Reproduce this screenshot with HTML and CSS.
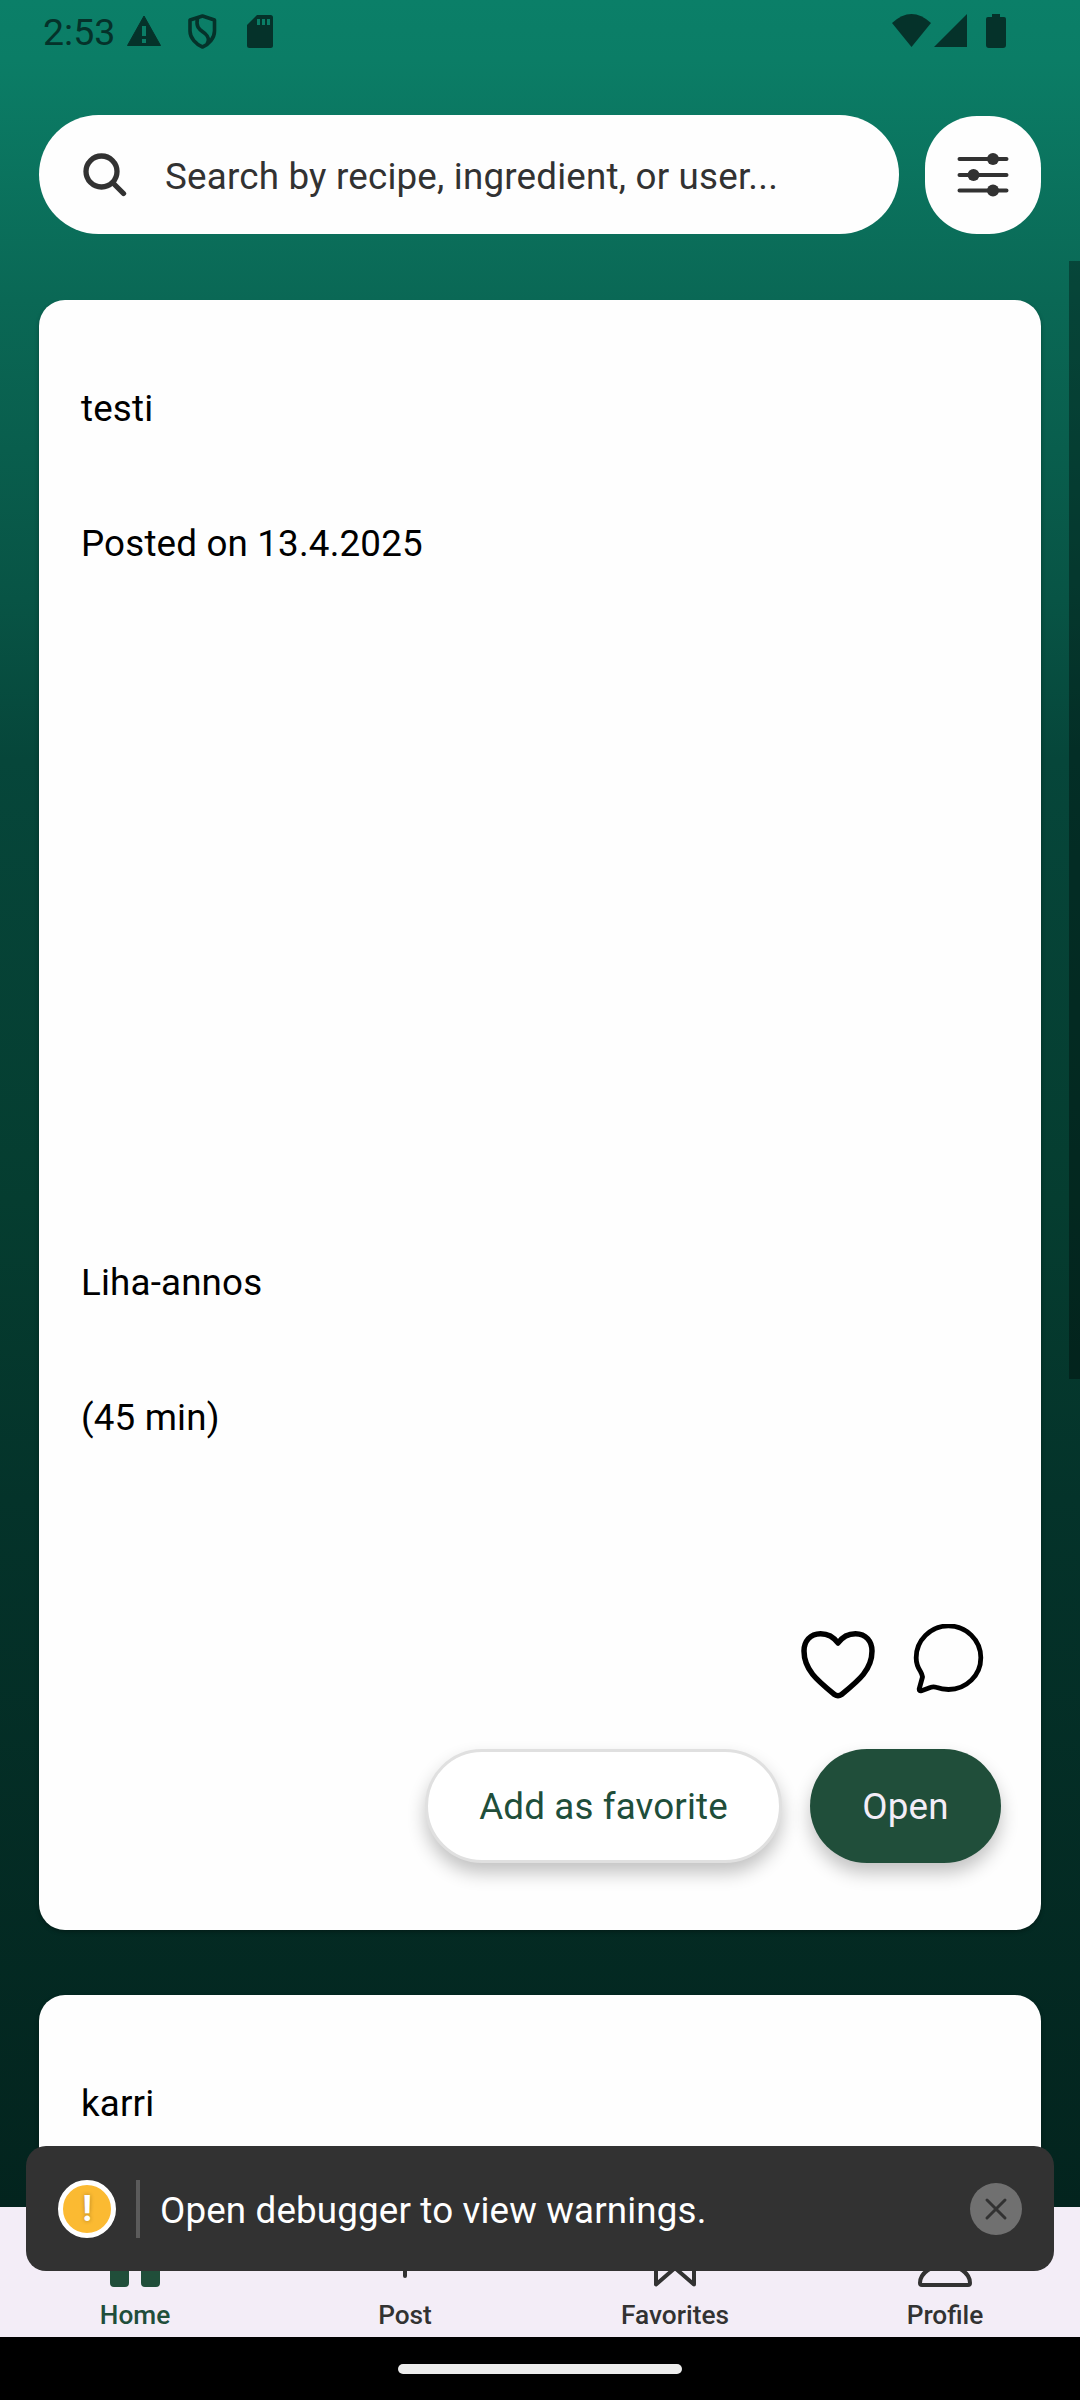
FILE: index.html
```html
<!DOCTYPE html>
<html lang="en">
<head>
<meta charset="utf-8">
<title>Recipes</title>
<link rel="stylesheet" href="styles.css">
</head>
<body>
<div class="screen">
  <header class="status">
    <span class="clock">2:53</span>
    <svg class="status-left" width="150" height="36" viewBox="0 0 150 36">
      <path d="M18 2 34.500 31.500H1.500Z" fill="currentColor" stroke="currentColor" stroke-linejoin="round"/>
      <path d="M16 12h4v10h-4zM16 25h4v4h-4z" fill="#0a7d66"/>
      <path d="M76.5 2 88.500 6V17C88.500 24 83 30.500 76.500 33 70 30.500 64 24 64 17V6Z" fill="none" stroke="currentColor" stroke-width="3.600" stroke-linejoin="round"/>
      <path d="M71.500 4C69.500 14 74 15.500 79 19.500 83 23 83 27 81 30" fill="none" stroke="currentColor" stroke-width="3.600"/>
      <path d="M131 1h13.500q2.500 0 2.500 2.500v28q0 2.500-2.500 2.500h-21q-2.500 0-2.500-2.500V11Z" fill="currentColor"/>
      <path d="M131 5h3v6h-3zM136 5h3v6h-3zM141 5h3v6h-3z" fill="#0a7d66"/>
    </svg>
    <svg class="status-right" width="116" height="36" viewBox="0 0 116 36">
      <path d="M0 9Q19.500-9 39 9L19.500 33Z" fill="currentColor"/>
      <path d="M42 33 75 0V33Z" fill="currentColor"/>
      <path d="M100 0h8v3h4q2 0 2 2v26q0 3-3 3H97q-3 0-3-3V5q0-2 2-2h4Z" fill="currentColor"/>
    </svg>
  </header>

  <div class="search-row">
    <div class="search">
      <svg width="44" height="44" viewBox="0 0 44 44"><circle cx="18.500" cy="18.500" r="15.500" fill="none" stroke="#323232" stroke-width="5.300"/><path d="M30 30 40.500 40.500" stroke="#323232" stroke-width="5.300" stroke-linecap="round"/></svg>
      <span class="placeholder">Search by recipe, ingredient, or user...</span>
    </div>
    <div class="filter">
      <svg width="52" height="44" viewBox="0 0 52 44" stroke="#323232" stroke-width="4" stroke-linecap="round"><path d="M2.500 6H49.500M2.500 22H49.500M2.500 37.500H49.500"/><g fill="#323232" stroke="none"><circle cx="36" cy="6" r="6"/><circle cx="16.500" cy="22" r="6"/><circle cx="36" cy="37.500" r="6"/></g></svg>
    </div>
  </div>

  <main class="feed">
    <article class="card first">
      <p class="line">testi</p>
      <p class="line">Posted on 13.4.2025</p>
      <div class="photo"></div>
      <p class="line">Liha-annos</p>
      <p class="line">(45 min)</p>
      <div class="reactions">
        <svg width="76" height="72" viewBox="0 0 76 72" fill="none" stroke="#000" stroke-width="5.500" stroke-linejoin="round"><path d="M38 14C33 7 27 4.700 20.500 4.700 10 4.700 4 12.500 4 22 4 41 18 52 34.500 65.500Q38 68 41.500 65.500C58 52 72 41 72 22 72 12.500 66 4.700 55.500 4.700 49 4.700 43 7 38 14Z"/></svg>
        <svg width="72" height="72" viewBox="0 0 72 72" fill="none" stroke="#000" stroke-width="4.800" stroke-linejoin="round"><path d="M9.500 53Q9 50 7.500 47.500C4.500 43 3.200 38.500 3.200 34A32.300 31.800 0 1 1 35.500 65.500C31 65.500 27 64.700 23 63.300Q20.500 62.300 18 63.300L8.500 66.700Q6 67.500 6.200 65Z"/></svg>
      </div>
      <div class="actions">
        <button class="btn outline">Add as favorite</button>
        <button class="btn solid">Open</button>
      </div>
    </article>
    <article class="card">
      <p class="line">karri</p>
    </article>
  </main>

  <nav class="tabs">
    <div class="tab active">
      <svg width="64" height="64" viewBox="0 0 64 64"><path d="M32 5 61 31H57V56q0 4-4 4H42q-4 0-4-4V42H26V56q0 4-4 4H11q-4 0-4-4V31H3Z" fill="currentColor"/></svg>
      <span>Home</span>
    </div>
    <div class="tab">
      <svg width="64" height="64" viewBox="0 0 64 64"><path d="M32 14V49M14 32H50" stroke="currentColor" stroke-width="4" stroke-linecap="round"/></svg>
      <span>Post</span>
    </div>
    <div class="tab">
      <svg width="64" height="64" viewBox="0 0 64 64"><path d="M13 57.500V10q0-5 5-5H46q5 0 5 5V57.500L32 41Z" fill="none" stroke="currentColor" stroke-width="4" stroke-linejoin="round"/></svg>
      <span>Favorites</span>
    </div>
    <div class="tab">
      <svg width="64" height="64" viewBox="0 0 64 64"><path d="M32 4C40 4 45 10 44 19 43 27 38 33 32 33S21 27 20 19C19 10 24 4 32 4ZM32 38C45 38 57 46 57 56Q57 58 55 58H9Q7 58 7 56C7 46 19 38 32 38Z" fill="none" stroke="currentColor" stroke-width="4"/></svg>
      <span>Profile</span>
    </div>
  </nav>
  <div class="gesture"><span></span></div>

  <div class="scrollbar"></div>
  <div class="toast">
    <span class="warn">!</span>
    <span class="rule"></span>
    <span class="message">Open debugger to view warnings.</span>
    <span class="close"><svg width="24" height="24" viewBox="0 0 24 24"><path d="M3 3 21 21M21 3 3 21" stroke="#323232" stroke-width="3" stroke-linecap="round"/></svg></span>
  </div>
</div>
</body>
</html>
```
FILE: styles.css
```css
* { box-sizing: border-box; }
body { margin: 0; font-family: Roboto, sans-serif; font-size: 36.75px; }
p { margin: 0; }
svg { display: block; flex: none; }
.screen {
  position: relative; width: 1080px; height: 2400px; overflow: hidden;
  display: flex; flex-direction: column;
  background: linear-gradient(#0b7f68 0, #0b7d66 60px, #0a6855 300px, #085445 600px, #06463a 760px, #053d30 1200px, #04332a 1500px, #03241e 2207px);
}
.status { height: 115px; flex: none; display: flex; align-items: flex-start; padding: 14px 73px 0 43px; color: #05322a; }
.clock { width: 83px; line-height: 36px; font-size: 37.5px; }
.status-right { margin-left: auto; margin-right: -1px; }
.search-row { height: 185px; flex: none; display: flex; align-items: flex-start; gap: 26px; padding: 0 39px; }
.search { width: 860px; height: 119px; border-radius: 60px; background: #fefefe; display: flex; align-items: center; padding-left: 44px; color: #323232; }
.placeholder { margin-left: 38px; padding-top: 3px; letter-spacing: .2px; white-space: nowrap; }
.filter { width: 116px; height: 118px; margin-top: 1px; border-radius: 52px; background: #fefefe; display: flex; align-items: center; justify-content: center; }
.filter svg { margin-right: 1px; }
.feed { flex: 1; min-height: 0; overflow: hidden; padding: 0 39px; display: flex; flex-direction: column; gap: 65px; }
.card { flex: none; height: 1630px; border-radius: 26px; background: #fefefe; padding: 82px 40px 0 42px; display: flex; flex-direction: column; box-shadow: 0 2px 4px rgba(0,0,0,.3); }
.line { height: 53px; line-height: 53px; letter-spacing: .17px; margin-bottom: 82px; white-space: nowrap; }
.photo { height: 604px; flex: none; }
.reactions { display: flex; justify-content: flex-end; gap: 37px; padding-right: 16px; margin-top: 98px; height: 125px; }
.reactions svg:first-child { margin-top: 5px; }
.actions { display: flex; justify-content: flex-end; gap: 28px; }
.btn { height: 114px; border: 0; border-radius: 57px; font: 36.75px Roboto, sans-serif; letter-spacing: .14px; padding: 0; box-shadow: 0 10px 18px rgba(0,0,0,.24); }
.outline { width: 357px; background: #fff; border: 3px solid #e0e0e0; color: #204e3a; }
.solid { width: 191px; background: #204e3a; color: #f3edf7; }
.tabs { height: 130px; flex: none; background: #f3edf7; display: flex; padding-top: 20px; color: #323232; }
.tab { flex: 1; display: flex; flex-direction: column; align-items: center; font-size: 26.25px; font-weight: 500; line-height: 32px; }
.tab svg { margin-right: 1px; }
.tab span { margin-top: 8px; }
.active { color: #204e3a; }
.gesture { height: 63px; flex: none; background: #000; display: flex; justify-content: center; padding-top: 27px; }
.gesture span { width: 284px; height: 10px; border-radius: 5px; background: #ececec; }
.scrollbar { position: absolute; right: 0; top: 261px; width: 11px; height: 1118px; background: rgba(0,0,0,.34); }
.toast { position: absolute; left: 26px; top: 2146px; width: 1028px; height: 125px; border-radius: 20px; background: #323232; color: #fff; display: flex; align-items: center; padding: 0 32px; }
.warn { width: 58px; height: 58px; border: 5px solid #fff; border-radius: 50%; background: #fbba32; text-align: center; font-size: 36px; font-weight: 700; line-height: 49px; text-shadow: 0 0 4px rgba(0,0,0,.3); }
.rule { width: 4px; height: 58px; margin-left: 20px; background: #5b5b5b; }
.message { margin-left: 20px; padding-top: 4px; letter-spacing: .15px; }
.close { width: 52px; height: 52px; margin-left: auto; border-radius: 50%; background: #707070; display: flex; align-items: center; justify-content: center; }
```
